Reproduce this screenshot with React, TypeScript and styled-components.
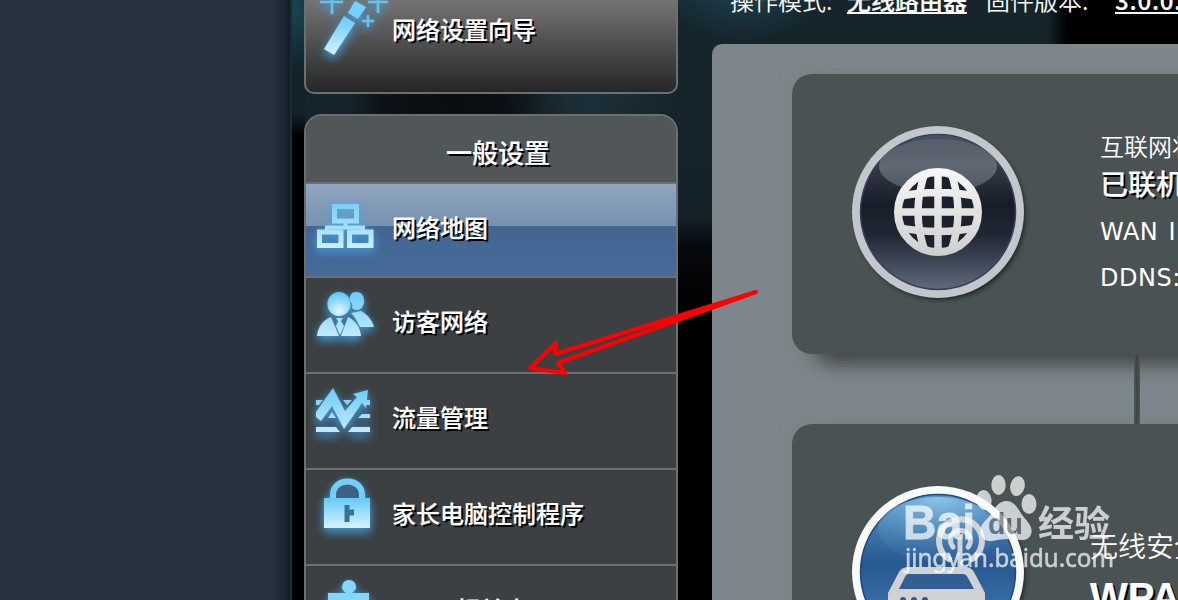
import React from "react";
import styled, { createGlobalStyle, css } from "styled-components";

const Global = createGlobalStyle`
  * { box-sizing: border-box; }
  html, body { margin: 0; height: 600px; overflow: hidden; background: #000; }
  body { font-family: "DejaVu Sans", "Noto Sans CJK SC", sans-serif; color: #fff; }
`;

const Page = styled.div`
  position: relative;
  display: flex;
  width: 1178px;
  height: 600px;
  overflow: hidden;
`;

const Gutter = styled.div`
  flex: none;
  width: 292px;
  border-right: 2px solid #1d2b33;
  background: linear-gradient(90deg, #26323e 0, #26323e 272px, #1b2832 284px, #101b22 290px);
`;

const Stage = styled.div`
  flex: none;
  display: flex;
  width: 886px;
  height: 600px;
  padding-left: 12px;
  overflow: hidden;
  background:
    radial-gradient(ellipse 90px 60px at 450px -20px, #1f4654 0%, rgba(31, 70, 84, 0) 100%),
    radial-gradient(ellipse 60px 60px at 0 10px, #1b4450 0%, rgba(27, 68, 80, 0) 100%),
    radial-gradient(ellipse 90px 60px at 300px 100px, #1d2f38 0%, rgba(29, 47, 56, 0) 100%),
    radial-gradient(ellipse 110px 60px at 165px 104px, #090d10 0%, #0c1217 65%, rgba(12, 18, 23, 0) 100%),
    linear-gradient(90deg, rgba(0, 0, 0, 0) 755px, #000 775px),
    linear-gradient(180deg, #11222a 0, #11222a 112px, #000 138px) 0 0 / 13px 600px no-repeat,
    linear-gradient(180deg, #16252c 0, #14232a 215px, #07090c 248px, #000 310px);
`;

const Sidebar = styled.nav`
  flex: none;
  display: flex;
  flex-direction: column;
  gap: 20px;
  width: 374px;
  text-shadow: 2px 2px 0 #000;
  -webkit-text-stroke: 0.2px #fff;
`;

const Label = styled.span`
  font: 500 24px/36px "Noto Sans CJK SC", sans-serif;
  white-space: pre;
`;

const Prefix = styled.span`
  display: inline-block;
  width: 64px;
  font-size: 22px;
`;

const Wizard = styled.div`
  position: relative;
  display: flex;
  flex: none;
  height: 94px;
  padding: 11px 0 0 86px;
  border: 2px solid #6b6f70;
  border-top: 0;
  border-radius: 0 0 10px 10px;
  background: linear-gradient(#747474, #262626);
`;

const Menu = styled.div`
  flex: none;
  height: 520px;
  border: 2px solid #6b6f70;
  border-bottom: 0;
  border-radius: 18px 18px 0 0;
  overflow: hidden;
  background: #3c4042;
`;

const MenuTitle = styled.div`
  height: 68px;
  padding: 16px 0 0 14px;
  border-bottom: 2px solid #6b6f70;
  background: #515659;
  text-align: center;
  font: 500 26px/40px "Noto Sans CJK SC", sans-serif;
`;

const MenuItem = styled.div<{ $active?: boolean }>`
  position: relative;
  display: flex;
  height: 96px;
  padding: 25px 0 0 86px;
  border-bottom: 2px solid #6b6f70;
  ${(p) =>
    p.$active &&
    css`
      height: 94px;
      background: linear-gradient(#8fa5c0 0, #7692ae 42px, #44668f 42px, #456b9b 92px);
    `}
`;

const Glyph = styled.svg`
  position: absolute;
  left: 0;
  top: 0;
  width: 86px;
  height: 92px;
  filter: drop-shadow(0 4px 5px rgba(72, 165, 235, 0.7)) drop-shadow(0 0 1px rgba(72, 165, 235, 0.5));
`;

const Main = styled.main`
  flex: none;
  width: 500px;
  margin-left: 34px;
`;

const TopLine = styled.header`
  display: flex;
  height: 44px;
  padding-left: 18px;
  white-space: nowrap;
  font: 350 24px/36px "Noto Sans CJK SC", sans-serif;
  & > span, & > b { flex: none; margin-top: -18px; height: 36px; }
`;

const Value = styled.b<{ $gap: number; $spread?: boolean }>`
  font-weight: 500;
  margin-left: ${(p) => p.$gap}px;
  letter-spacing: ${(p) => (p.$spread ? "0.8px" : "0")};
  text-decoration: underline;
  text-decoration-thickness: 2px;
  text-underline-offset: 2px;
  text-decoration-skip-ink: none;
  -webkit-text-stroke: 0.2px #fff;
`;

const Name = styled.span<{ $w: number; $gap?: number }>`
  width: ${(p) => p.$w}px;
  margin-left: ${(p) => p.$gap || 0}px;
`;

const Panel = styled.section`
  height: 560px;
  padding: 30px 0 0 80px;
  border-radius: 10px 0 0 0;
  background: #7d878b;
`;

const Card = styled.article<{ $last?: boolean }>`
  display: flex;
  height: 280px;
  padding-left: 56px;
  background: #4a5254;
  border-radius: ${(p) => (p.$last ? "20px 0 0 0" : "20px 0 0 20px")};
  box-shadow: 20px 14px 20px -4px #404343, 0 0 18px rgba(110, 112, 105, 0.25);
`;

const Connector = styled.div`
  position: relative;
  width: 6px;
  height: 70px;
  margin-left: 342px;
  background: linear-gradient(90deg, #555b5d, #424546 35%, #424546 65%, #555b5d);
`;

const Badge = styled.svg<{ $top: number }>`
  flex: none;
  width: 184px;
  height: 184px;
  margin-top: ${(p) => p.$top}px;
`;

const Info = styled.div<{ $x: number }>`
  flex: none;
  width: 220px;
  margin-left: ${(p) => p.$x}px;
  white-space: nowrap;
`;

const Line = styled.div<{ $size: number; $top: number; $h: number; $bold?: boolean; $latin?: boolean }>`
  margin-top: ${(p) => p.$top}px;
  height: ${(p) => p.$h}px;
  line-height: ${(p) => p.$h}px;
  font-size: ${(p) => p.$size}px;
  font-family: ${(p) => (p.$latin ? '"DejaVu Sans"' : '"Noto Sans CJK SC"')}, sans-serif;
  font-weight: ${(p) => (p.$bold ? 500 : p.$latin ? 400 : 350)};
  ${(p) => p.$latin && "letter-spacing: 0.5px; word-spacing: 2px;"}
  ${(p) => p.$bold && "text-shadow: 2px 2px 0 #000; -webkit-text-stroke: 0.2px #fff;"}
`;

const Security = styled(Line)`
  font-family: "Liberation Sans", sans-serif;
  font-weight: 700;
`;

const Overlay = styled.svg`
  position: absolute;
  left: 0;
  top: 0;
  width: 1178px;
  height: 600px;
  pointer-events: none;
`;

const Defs = () => (
  <defs>
    <linearGradient id="ice" x1="0" y1="0" x2="0" y2="1">
      <stop offset="0" stopColor="#66c9f5" />
      <stop offset="1" stopColor="#d8f2ff" />
    </linearGradient>
    <linearGradient id="iceTall" gradientUnits="userSpaceOnUse" x1="0" y1="10" x2="0" y2="66">
      <stop offset="0" stopColor="#62c8f6" />
      <stop offset="1" stopColor="#d4f0fd" />
    </linearGradient>
    <radialGradient id="head" cx="0.5" cy="0.8" r="0.75">
      <stop offset="0" stopColor="#e4f6ff" />
      <stop offset="1" stopColor="#62c8f6" />
    </radialGradient>
  </defs>
);

const WandIcon = () => (
  <Glyph viewBox="0 0 86 92">
    <Defs />
    <path d="M38 16L49 23L28 55L18 49Z" fill="url(#ice)" />
    <path d="M49 1L60 7L52 19L42 13Z" fill="#76d2fb" />
    <path d="M14 2H37M26 -6V14M62 2H82M72 -6V13M56 21H68M62 15V27" stroke="#65c2e9" strokeWidth="2.6" />
  </Glyph>
);

const MapIcon = () => (
  <Glyph viewBox="0 0 86 92">
    <g fill="none" stroke="url(#iceTall)">
      <path d="M28.500 22.500H50.500V37H28.500Z" strokeWidth="5" />
      <path d="M13.500 48H35V61.500H13.500ZM43.500 48H65V61.500H43.500Z" strokeWidth="5" />
      <path d="M39.500 39V45M21 47V43.500H57V47" strokeWidth="4" />
    </g>
  </Glyph>
);

const GuestIcon = () => (
  <Glyph viewBox="0 0 86 92">
    <g fill="url(#iceTall)">
      <path d="M44 23C43 17 46 14 50 14C56 14 58 18 58 23C58 28 55 32 51 32C49 32 47 31 46 30C47 27 46 25 44 23Z" />
      <path d="M45 35L55 33C62 37 66 42 68 49H54C51 43 49 39 45 35Z" />
      <path d="M25 39L33 58H11C12 49 17 42 25 39ZM42 39C50 43 54 49 55 58H35Z" />
      <path d="M30 40H37L35 43L38 48L34 57L30 48L32 43Z" />
    </g>
    <ellipse cx="33" cy="26" rx="11.500" ry="12" fill="url(#head)" />
  </Glyph>
);

const TrafficIcon = () => (
  <Glyph viewBox="0 0 86 92">
    <g fill="url(#iceTall)">
      <path d="M10 38L27 14L39 37L51 23L47 20L62 16L60 34L56 29L38 55L26 32L15 47L10 43Z" />
      <path d="M10 26H17L13 31H10ZM37 26H46L41 31ZM22 44L26 38L30 44ZM52 44L56 40H64V44ZM10 53H30L34 58H10ZM46 53H64V58H42ZM60 26H64V31H60Z" />
    </g>
  </Glyph>
);

const LockIcon = () => (
  <Glyph viewBox="0 0 86 92">
    <path d="M27 29V25C27 7 56 7 56 25V29Z" fill="#3d6380" />
    <path d="M27 30V25C27 7 56 7 56 25V30" fill="none" stroke="#73cff8" strokeWidth="6" />
    <rect x="18" y="28" width="46" height="30" fill="url(#ice)" />
    <path d="M38.500 35H43.500V39.500H48V45.500H43.500V52H38.500Z" fill="#3c6f94" />
  </Glyph>
);

const PuzzleIcon = () => (
  <Glyph viewBox="0 0 86 92">
    <path d="M22 27H40C38 25 36 24 36 21A7 7 0 0 1 50 21C50 24 48 25 46 27H63V70H22Z" fill="#83d7fb" />
  </Glyph>
);

const GlobeBadge = () => (
  <Badge $top={46} viewBox="0 0 184 184">
    <defs>
      <linearGradient id="navy" x1="0" y1="0" x2="0" y2="1">
        <stop offset="0" stopColor="#4c5462" />
        <stop offset="0.45" stopColor="#171d28" />
        <stop offset="0.65" stopColor="#202734" />
        <stop offset="1" stopColor="#5f6a7c" />
      </linearGradient>
      <linearGradient id="gloss" x1="0" y1="0" x2="0" y2="1">
        <stop offset="0" stopColor="#7b838d" stopOpacity="0.3" />
        <stop offset="0.5" stopColor="#7d8790" stopOpacity="0.6" />
        <stop offset="1" stopColor="#6e7782" stopOpacity="0.55" />
      </linearGradient>
      <linearGradient id="silver" gradientUnits="userSpaceOnUse" x1="0" y1="48" x2="0" y2="136">
        <stop offset="0" stopColor="#f8f8f8" />
        <stop offset="1" stopColor="#cecece" />
      </linearGradient>
      <clipPath id="disc"><circle cx="90" cy="92" r="41" /></clipPath>
      <filter id="soft"><feGaussianBlur stdDeviation="2" /></filter>
    </defs>
    <circle cx="92.500" cy="95" r="85" fill="#20282b" filter="url(#soft)" />
    <circle cx="90" cy="92" r="86" fill="#c3c6ca" />
    <circle cx="90" cy="92" r="77.500" fill="url(#navy)" stroke="#34435c" strokeWidth="1.500" />
    <ellipse cx="90" cy="46" rx="59" ry="27" fill="url(#gloss)" />
    <circle cx="90" cy="92" r="42" fill="#1b222d" />
    <g fill="none" stroke="url(#silver)" strokeWidth="7.500" clipPath="url(#disc)">
      <path d="M90.010 48L90 136M46 92.010L134 92M48 77Q90 68 132 77M48 107Q90 116 132 107" />
      <path d="M78 50Q62 92 78 134M102 50Q118 92 102 134" />
    </g>
    <circle cx="90" cy="92" r="40" fill="none" stroke="url(#silver)" strokeWidth="8" />
  </Badge>
);

const RouterBadge = () => (
  <Badge $top={56} viewBox="0 0 184 184">
    <defs>
      <linearGradient id="blue" x1="0" y1="0" x2="0" y2="1">
        <stop offset="0" stopColor="#5694c8" />
        <stop offset="0.45" stopColor="#28588f" />
        <stop offset="1" stopColor="#4685c2" />
      </linearGradient>
      <radialGradient id="sky" cx="0.5" cy="0" r="0.9">
        <stop offset="0" stopColor="#91caed" stopOpacity="0.95" />
        <stop offset="1" stopColor="#4c88ba" stopOpacity="0.2" />
      </radialGradient>
    </defs>
    <circle cx="92.500" cy="95" r="85" fill="#20282b" filter="url(#soft)" />
    <circle cx="90" cy="92" r="86" fill="#fafafa" />
    <circle cx="90" cy="92" r="77.500" fill="url(#blue)" stroke="#244878" strokeWidth="1.500" />
    <ellipse cx="90" cy="49" rx="60" ry="32" fill="url(#sky)" />
    <g fill="none" stroke="#d0d3d9" strokeWidth="6" strokeLinecap="round">
      <path d="M101 79A21.500 21.500 0 1 1 124 79" />
      <path d="M105 67A10 10 0 1 1 120 67M112 60V86" strokeWidth="5" />
    </g>
    <path d="M61 87H117Q123 87 126 92L137 113V150H40V113L51 92Q54 87 61 87Z" fill="#d0d1d3" />
    <path d="M61 94H115Q118 94 120 98L126 109H51L57 97Q58 94 61 94Z" fill="#315f93" />
    <g fill="#315b8a">
      <circle cx="55" cy="120" r="3" /><circle cx="66" cy="120" r="3" /><circle cx="77" cy="120" r="3" />
    </g>
  </Badge>
);

const Watermark = () => (
  <g fill="#fff" opacity="0.72">
    <text x="903" y="539" fontSize="48" fontWeight="700" fontFamily="Liberation Sans, sans-serif" textLength="72" lengthAdjust="spacingAndGlyphs" stroke="#fff" strokeWidth="0.800">Bai</text>
    <ellipse cx="984" cy="500" rx="7.500" ry="10" transform="rotate(-10 984 500)" />
    <ellipse cx="998.500" cy="485" rx="7.200" ry="10" />
    <ellipse cx="1017.500" cy="486" rx="7.200" ry="10" transform="rotate(12 1017 486)" />
    <ellipse cx="1029" cy="504" rx="7.500" ry="10" />
    <path d="M1006 501C1017 501 1019 513 1027 521C1036 531 1031 541 1020 540C1010 538 1001 539 992 541C980 542 976 530 985 521C994 513 995 502 1006 501Z" />
    <text x="988" y="534" fontSize="29" fontWeight="700" fontFamily="Liberation Sans, sans-serif" fill="#6b7478" textLength="35" lengthAdjust="spacingAndGlyphs">du</text>
    <text x="1038" y="537" fontSize="36" fontWeight="700" fontFamily="Noto Sans CJK SC, sans-serif">经验</text>
    <text x="905" y="567" fontSize="25" fontFamily="Noto Sans, sans-serif" textLength="209" lengthAdjust="spacingAndGlyphs" stroke="#fff" strokeWidth="0.500">jingyan.baidu.com</text>
  </g>
);

export default function App() {
  return (
    <Page>
      <Global />
      <Gutter />
      <Stage>
        <Sidebar>
          <Wizard><WandIcon /><Label>网络设置向导</Label></Wizard>
          <Menu>
            <MenuTitle>一般设置</MenuTitle>
            <MenuItem $active><MapIcon /><Label>网络地图</Label></MenuItem>
            <MenuItem><GuestIcon /><Label>访客网络</Label></MenuItem>
            <MenuItem><TrafficIcon /><Label>流量管理</Label></MenuItem>
            <MenuItem><LockIcon /><Label>家长电脑控制程序</Label></MenuItem>
            <MenuItem><PuzzleIcon /><Label><Prefix>USB</Prefix>相关应用</Label></MenuItem>
          </Menu>
        </Sidebar>
        <Main>
          <TopLine>
            <Name $w={117}>操作模式:</Name>
            <Value $gap={0}>无线路由器</Value>
            <Name $w={110} $gap={19}>固件版本:</Name>
            <Value $gap={19} $spread>3.0.0.4</Value>
          </TopLine>
          <Panel>
            <Card>
              <GlobeBadge />
              <Info $x={68}>
                <Line $size={24} $top={54} $h={36}>互联网状态:</Line>
                <Line $size={28} $top={0} $h={38} $bold>已联机</Line>
                <Line $size={24} $top={12} $h={36} $latin>WAN IP:</Line>
                <Line $size={24} $top={10} $h={36} $latin>DDNS:</Line>
              </Info>
            </Card>
            <Connector />
            <Card $last>
              <RouterBadge />
              <Info $x={58}>
                <Line $size={28} $top={101} $h={40}>无线安全级别:</Line>
                <Security $size={40} $top={10} $h={44} $bold>WPA2-Personal</Security>
              </Info>
            </Card>
          </Panel>
        </Main>
      </Stage>
      <Overlay viewBox="0 0 1178 600">
        <Watermark />
        <path d="M756 292L555 354L556 343L530 368L565 373L558 363Z" fill="none" stroke="#f00" strokeWidth="4" strokeLinejoin="round" />
      </Overlay>
    </Page>
  );
}
